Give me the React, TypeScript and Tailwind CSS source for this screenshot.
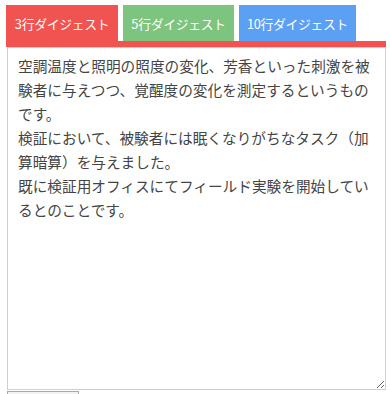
import { useState } from "react";

const tabs = [
    { label: "3行ダイジェスト", bg: "bg-[#f05350]", w: "w-[112px]" },
    { label: "5行ダイジェスト", bg: "bg-[#7dc47f]", w: "w-[111px]" },
    { label: "10行ダイジェスト", bg: "bg-[#5ca0f4]", w: "w-[117px]" },
];

const digest =
    "空調温度と照明の照度の変化、芳香といった刺激を被験者に与えつつ、覚醒度の変化を測定するというものです。\n検証において、被験者には眠くなりがちなタスク（加算暗算）を与えました。\n既に検証用オフィスにてフィールド実験を開始しているとのことです。";

export default function App() {
    const [text, setText] = useState(digest);

    return (
        <div
            className="bg-white pl-[6px] pt-[5px] w-[390px] h-[394px] overflow-hidden"
            style={{ fontFamily: '"Noto Sans CJK JP", "Noto Sans", sans-serif' }}
        >
            <div className="w-[380px]">
                {/* Tabs */}
                <div className="flex gap-[5px]">
                    {tabs.map((t) => (
                        <button
                            key={t.label}
                            className={`${t.bg} ${t.w} shrink-0 h-[36px] text-[12.8px] tracking-[-0.3px] text-white leading-none whitespace-nowrap flex items-center justify-center pt-[3px]`}
                        >
                            {t.label}
                        </button>
                    ))}
                </div>
                <div className="h-[6px] bg-[#f05350]" />

                {/* Digest text */}
                <textarea
                    value={text}
                    onChange={(e) => setText(e.target.value)}
                    className="block ml-px w-[379px] h-[343px] border border-[#cfcfcf] px-[10px] pt-[6px] text-[14.67px] leading-[24px] text-[#444] outline-none resize-y"
                    style={{ fontFamily: '"Noto Sans CJK JP", "Noto Sans", sans-serif' }}
                />

                <div className="ml-px mt-px w-[72px] h-[10px] border border-[#a9a9a9] bg-[#f3f3f3]" />
            </div>
        </div>
    );
}
